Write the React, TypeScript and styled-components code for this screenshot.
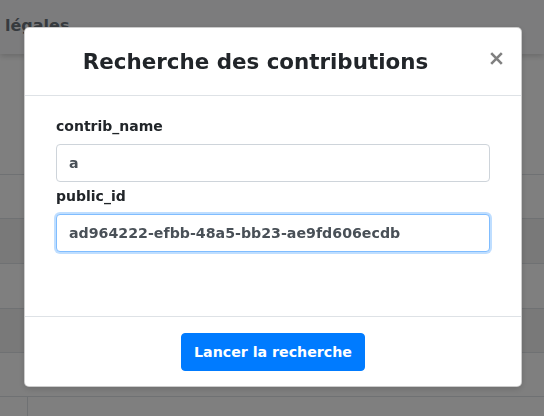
import React, { useEffect, useRef } from "react";
import styled, { createGlobalStyle } from "styled-components";

const GlobalStyle = createGlobalStyle`
  html, body { margin: 0; padding: 0; background: #fff; }
  body { font-family: "DejaVu Sans", Verdana, sans-serif; color: #212529; overflow: hidden; }
  * { box-sizing: border-box; }
`;

const Page = styled.div`
  width: 544px;
  height: 416px;
  display: flex;
  flex-direction: column;
  overflow: hidden;
`;

const Navbar = styled.div`
  height: 54px;
  flex: none;
  background: #f8f9fa;
  box-shadow: 0 2px 6px rgba(0, 0, 0, 0.18);
  display: flex;
  align-items: center;
  padding: 0 5px 4px;
  font-size: 16px;
  font-weight: bold;
  color: #6c757d;
`;

const Spacer = styled.div`
  height: 104px;
  flex: none;
`;

const Row = styled.div<{ $h: number; $striped?: boolean }>`
  height: ${(p) => p.$h}px;
  flex: none;
  border-bottom: 1px solid #dee2e6;
  background: ${(p) => (p.$striped ? "rgba(0,0,0,0.05)" : "transparent")};
`;

const Bottom = styled.div`
  flex: 1;
  display: flex;
  border-top: 1px solid #dee2e6;
  margin-top: -1px;
`;

const Gutter = styled.div`
  width: 28px;
  border-right: 1px solid #dee2e6;
`;

const Backdrop = styled.div`
  position: fixed;
  inset: 0;
  background: rgba(0, 0, 0, 0.5);
`;

const Dialog = styled.div`
  position: fixed;
  left: 24px;
  top: 27px;
  width: 498px;
  background: #fff;
  border: 1px solid rgba(0, 0, 0, 0.2);
  border-radius: 5px;
  box-shadow: 0 2px 6px rgba(0, 0, 0, 0.15);
  display: flex;
  flex-direction: column;
`;

const Header = styled.div`
  display: flex;
  align-items: flex-start;
  padding: 18px 16px;
  border-bottom: 1px solid #dee2e6;
`;

const Title = styled.h5`
  flex: 1;
  margin: 0;
  padding-left: 5px;
  text-align: center;
  font-size: 21.4px;
  line-height: 31px;
  font-weight: bold;
  color: #212529;
`;

const CloseButton = styled.button`
  width: 40px;
  height: 31px;
  border: 0;
  background: transparent;
  padding: 0 2px 0 0;
  margin-top: -3px;
  display: flex;
  align-items: center;
  justify-content: flex-end;
  cursor: pointer;
`;

const Body = styled.div`
  padding: 20px 31px 64px;
  display: flex;
  flex-direction: column;
`;

const Label = styled.label<{ $first?: boolean }>`
  display: block;
  font-size: 14px;
  line-height: 21px;
  font-weight: bold;
  color: #212529;
  margin: ${(p) => (p.$first ? "0" : "4px")} 0 7px;
`;

const Input = styled.input<{ $focused?: boolean }>`
  display: block;
  width: 100%;
  height: 38px;
  padding: 0 12px;
  font-family: "DejaVu Sans", Verdana, sans-serif;
  font-size: 14.2px;
  font-weight: bold;
  color: #495057;
  background: #fff;
  border: 1px solid ${(p) => (p.$focused ? "#80bdff" : "#ced4da")};
  border-radius: 4px;
  outline: none;
  box-shadow: ${(p) => (p.$focused ? "0 0 0 2px rgba(0,123,255,0.25)" : "none")};
  caret-color: #212529;
`;

const Footer = styled.div`
  border-top: 1px solid #dee2e6;
  padding: 16px 16px 15px;
  display: flex;
  justify-content: center;
`;

const PrimaryButton = styled.button`
  height: 38px;
  padding: 0 12px;
  background: #007bff;
  color: #fff;
  border: 1px solid #007bff;
  border-radius: 4px;
  font-family: "DejaVu Sans", Verdana, sans-serif;
  font-size: 14.2px;
  font-weight: bold;
  cursor: pointer;
`;

const CloseIcon = () => (
  <svg width="13" height="13" viewBox="0 0 13 13">
    <path d="M1.2 1.2 L11.8 11.8 M11.8 1.2 L1.2 11.8" stroke="#808080" strokeWidth="2.6" strokeLinecap="butt" />
  </svg>
);

export default function App() {
  const ref = useRef<HTMLInputElement>(null);
  useEffect(() => {
    const el = ref.current;
    if (el) {
      el.focus();
      const n = el.value.length;
      el.setSelectionRange(n, n);
    }
  }, []);

  return (
    <>
      <GlobalStyle />
      <Page>
        <Navbar>légales</Navbar>
        <Spacer />
        <Row $h={17} />
        <Row $h={44} />
        <Row $h={45} $striped />
        <Row $h={45} />
        <Row $h={44} $striped />
        <Row $h={44} />
        <Bottom>
          <Gutter />
        </Bottom>
      </Page>
      <Backdrop />
      <Dialog role="dialog">
        <Header>
          <Title>Recherche des contributions</Title>
          <CloseButton aria-label="Close">
            <CloseIcon />
          </CloseButton>
        </Header>
        <Body>
          <Label $first htmlFor="contrib_name">contrib_name</Label>
          <Input id="contrib_name" defaultValue="a" />
          <Label htmlFor="public_id">public_id</Label>
          <Input ref={ref} id="public_id" $focused defaultValue="ad964222-efbb-48a5-bb23-ae9fd606ecdb" />
        </Body>
        <Footer>
          <PrimaryButton>Lancer la recherche</PrimaryButton>
        </Footer>
      </Dialog>
    </>
  );
}
